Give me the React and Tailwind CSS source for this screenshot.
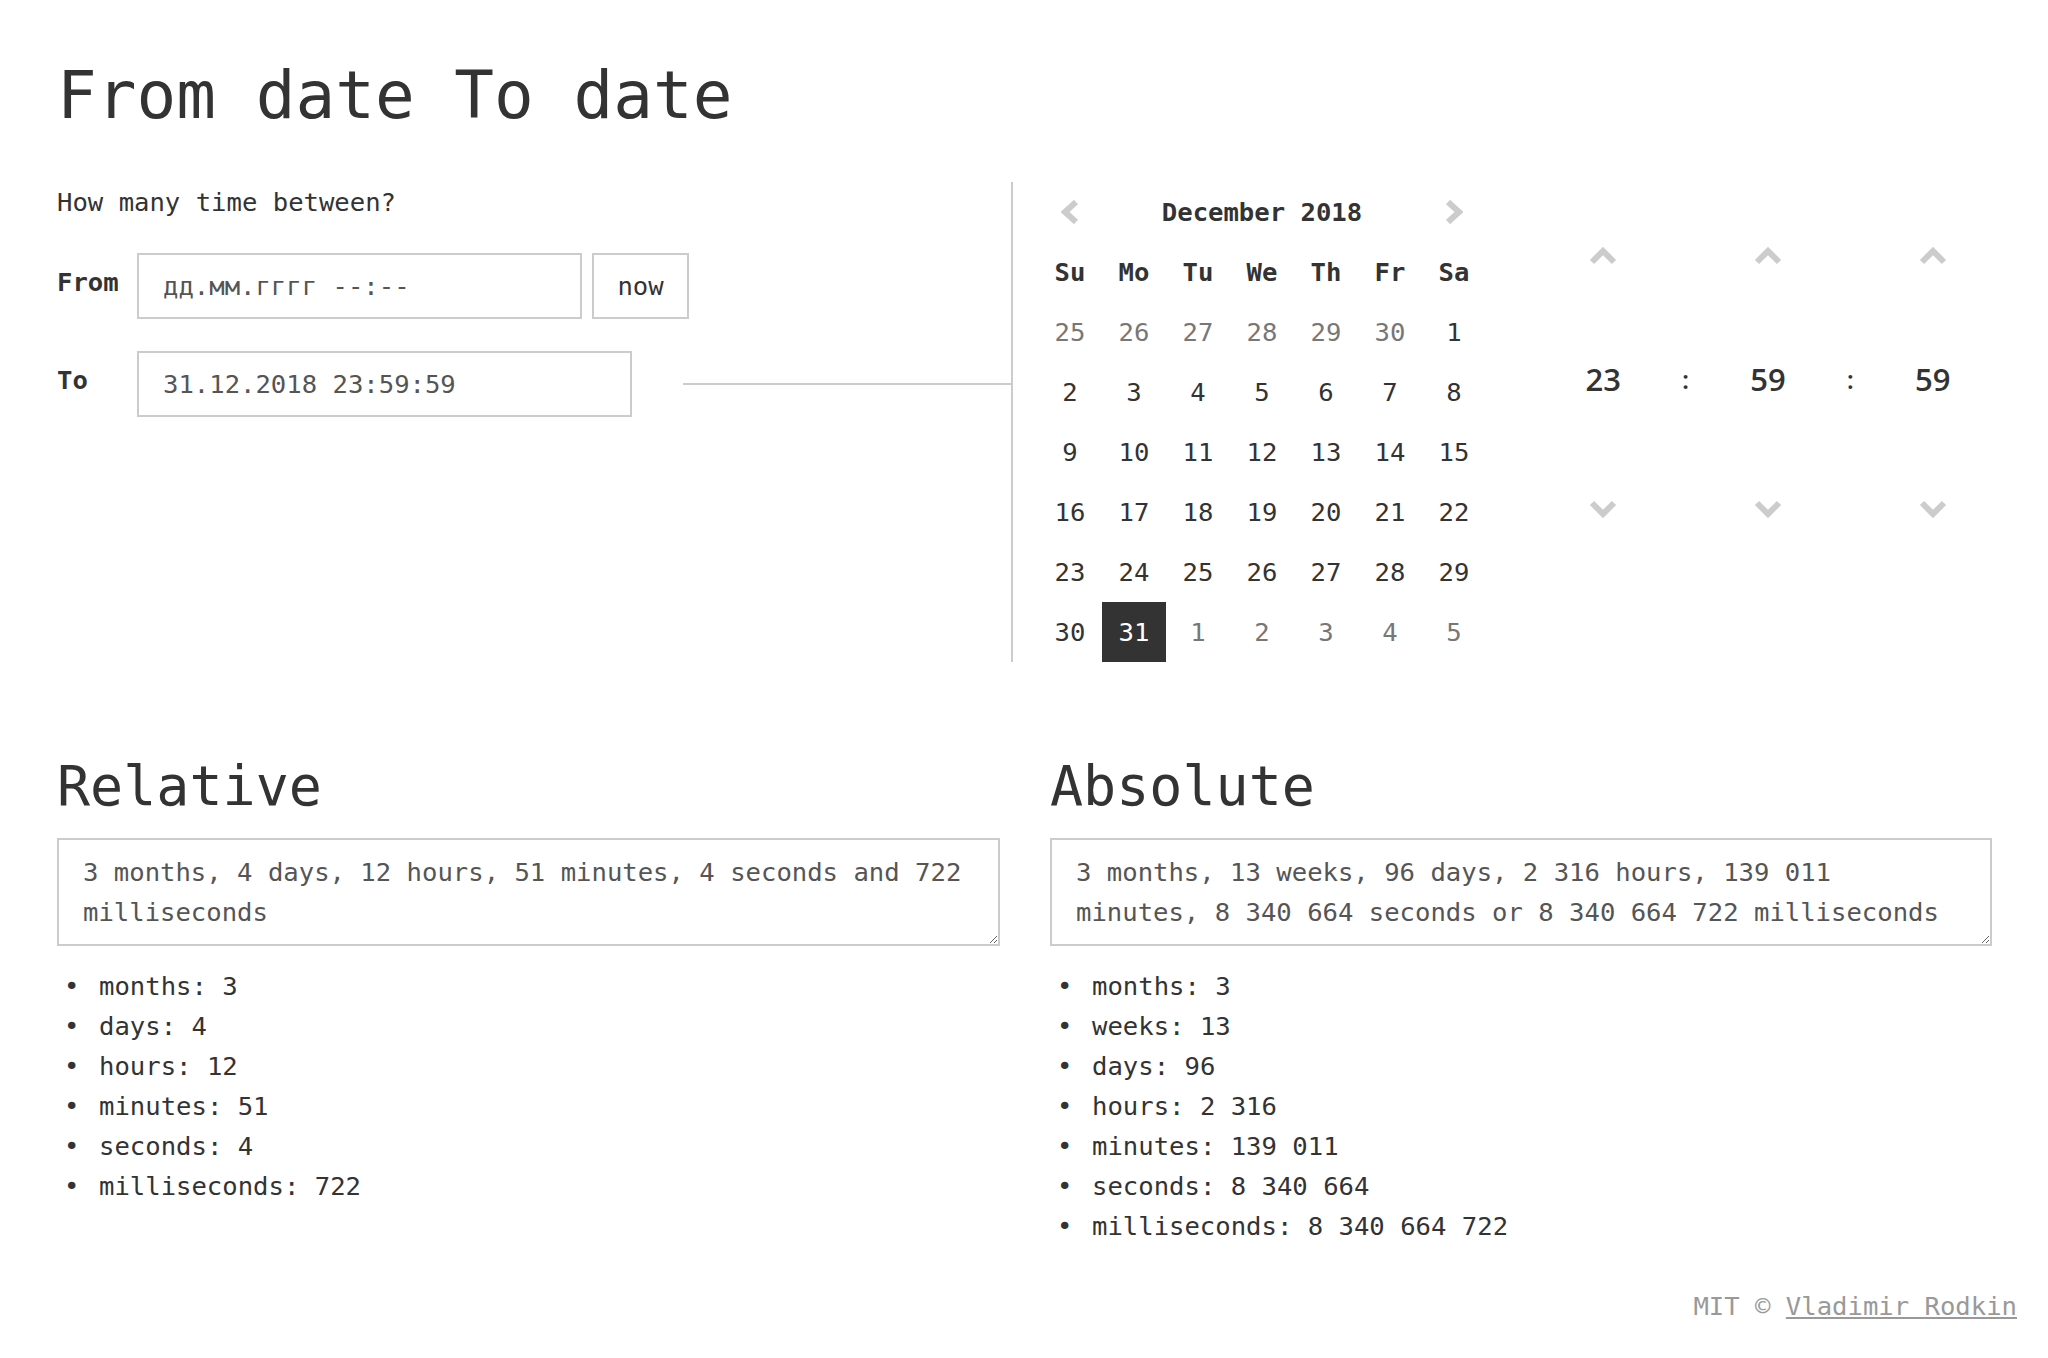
import React from 'react';

const weekdays = ['Su', 'Mo', 'Tu', 'We', 'Th', 'Fr', 'Sa'];

// December 2018 grid, with the tail of November and head of January greyed out.
const days = [
  ...[25, 26, 27, 28, 29, 30].map((d) => ({ d, muted: true })),
  ...Array.from({ length: 31 }, (_, i) => ({ d: i + 1, active: i === 30 })),
  ...[1, 2, 3, 4, 5].map((d) => ({ d, muted: true })),
];

const relative = [
  ['months', '3'],
  ['days', '4'],
  ['hours', '12'],
  ['minutes', '51'],
  ['seconds', '4'],
  ['milliseconds', '722'],
];

const absolute = [
  ['months', '3'],
  ['weeks', '13'],
  ['days', '96'],
  ['hours', '2 316'],
  ['minutes', '139 011'],
  ['seconds', '8 340 664'],
  ['milliseconds', '8 340 664 722'],
];

function Chevron({ dir }) {
  const pts = {
    up: '3,15 14,4 25,15',
    down: '3,3 14,14 25,3',
    left: '15,3 4,13 15,23',
    right: '3,3 14,13 3,23',
  }[dir];
  const vertical = dir === 'up' || dir === 'down';
  return (
    <svg
      width={vertical ? 28 : 18}
      height={vertical ? 18 : 26}
      viewBox={vertical ? '0 0 28 18' : '0 0 18 26'}
      className="block"
    >
      <polyline points={pts} fill="none" stroke="#cccccc" strokeWidth="6" strokeLinejoin="miter" />
    </svg>
  );
}

function Calendar() {
  return (
    <div className="ml-[25px] w-[448px]">
      <div className="grid grid-cols-7 h-[60px] items-center">
        <div className="flex justify-center">
          <Chevron dir="left" />
        </div>
        <div className="col-span-5 text-center font-bold">December 2018</div>
        <div className="flex justify-center">
          <Chevron dir="right" />
        </div>
      </div>
      <div className="grid grid-cols-7">
        {weekdays.map((w) => (
          <div key={w} className="h-[60px] flex items-center justify-center font-bold">
            {w}
          </div>
        ))}
        {days.map((x, i) => (
          <div
            key={i}
            className={
              'h-[60px] flex items-center justify-center ' +
              (x.active ? 'bg-[#333] text-white' : x.muted ? 'text-[#777]' : 'text-[#333]')
            }
          >
            {x.d}
          </div>
        ))}
      </div>
    </div>
  );
}

function TimePicker() {
  const cols = ['23', ':', '59', ':', '59'];
  return (
    <div className="ml-[76px] w-[412px] font-['Open_Sans',sans-serif] text-[#333]">
      <div className="grid grid-cols-5 h-[40px] mt-[54px] items-center">
        {cols.map((c, i) => (
          <div key={i} className="flex justify-center">
            {c !== ':' && <Chevron dir="up" />}
          </div>
        ))}
      </div>
      <div className="grid grid-cols-5 h-[40px] mt-[83px] items-center">
        {cols.map((c, i) => (
          <div key={i} className={'text-center font-semibold ' + (c === ':' ? 'text-[26px]' : 'text-[31px]')}>
            {c}
          </div>
        ))}
      </div>
      <div className="grid grid-cols-5 h-[40px] mt-[90px] items-center">
        {cols.map((c, i) => (
          <div key={i} className="flex justify-center">
            {c !== ':' && <Chevron dir="down" />}
          </div>
        ))}
      </div>
    </div>
  );
}

function Result({ title, text, items }) {
  return (
    <section>
      <h2 className="text-[55px] leading-[65px]">{title}</h2>
      <textarea
        readOnly
        value={text}
        rows={2}
        className="mt-[19px] block w-full h-[108px] border-2 border-[#ccc] pl-[24px] pr-[12px] py-[12px] text-[#555] leading-[40px] outline-none"
      />
      <ul className="mt-[20px]">
        {items.map(([k, v]) => (
          <li key={k} className="flex">
            <span className="w-[42px] shrink-0 pl-[7px]">•</span>
            <span>
              {k}: {v}
            </span>
          </li>
        ))}
      </ul>
    </section>
  );
}

export default function App() {
  return (
    <div className="min-h-screen bg-white text-[#333] font-['DejaVu_Sans_Mono',monospace] text-[25.6px] leading-[40px]">
      <div className="pl-[57px] pr-[52px]">
        <h1 className="pt-[57px] text-[66px] leading-[78px]">From date To date</h1>

        <div className="mt-[47px] flex">
          <div className="w-[954px] shrink-0">
            <p>How many time between?</p>

            <div className="mt-[31px] flex items-start">
              <label className="w-[80px] pt-[9px] font-bold">From</label>
              <input
                type="text"
                placeholder="дд.мм.гггг --:--"
                className="w-[445px] h-[66px] border-2 border-[#ccc] px-[24px] text-[#555] placeholder:text-[#555] outline-none"
              />
              <button className="ml-[10px] w-[97px] h-[66px] border-2 border-[#ccc] text-[#333]">now</button>
            </div>

            <div className="mt-[32px] flex items-start">
              <label className="w-[80px] pt-[9px] font-bold">To</label>
              <input
                type="text"
                readOnly
                value="31.12.2018 23:59:59"
                className="w-[495px] h-[66px] border-2 border-[#ccc] px-[24px] text-[#555] outline-none"
              />
              <div className="ml-[51px] flex-1 h-[2px] bg-[#ccc] self-center" />
            </div>
          </div>

          <div className="flex h-[480px] border-l-2 border-[#ccc]">
            <Calendar />
            <TimePicker />
          </div>
        </div>

        <div className="mt-[92px] grid grid-cols-[943px_942px] gap-x-[50px]">
          <Result
            title="Relative"
            text={'3 months, 4 days, 12 hours, 51 minutes, 4 seconds and 722\nmilliseconds'}
            items={relative}
          />
          <Result
            title="Absolute"
            text={'3 months, 13 weeks, 96 days, 2 316 hours, 139 011\nminutes, 8 340 664 seconds or 8 340 664 722 milliseconds'}
            items={absolute}
          />
        </div>
      </div>

      <footer className="mt-[40px] pr-[31px] pb-[33px] text-right text-[#999]">
        MIT ©{' '}
        <a href="#" className="underline text-[#999]">
          Vladimir Rodkin
        </a>
      </footer>
    </div>
  );
}
